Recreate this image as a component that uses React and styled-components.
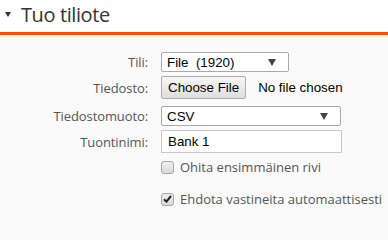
import React from "react";
import styled, { createGlobalStyle } from "styled-components";

const Global = createGlobalStyle`
  html, body { margin: 0; padding: 0; background: #fafafa; }
  body { width: 388px; height: 217px; overflow: hidden; font-family: "Open Sans", sans-serif; }
`;

const Header = styled.div`
  height: 32px;
  background: #fff;
  border-bottom: 3px solid #ff5000;
  display: flex;
  align-items: center;
  padding-left: 5px;
  box-sizing: content-box;
`;

const Caret = styled.svg`
  width: 6px;
  height: 5px;
  margin-right: 10px;
  margin-bottom: 3px;
`;

const Title = styled.h1`
  margin: 0 0 2px 0;
  font-family: "Open Sans", sans-serif;
  font-weight: 400;
  font-size: 20px;
  letter-spacing: -0.4px;
  color: #333;
  line-height: 1;
`;

const Form = styled.div`
  display: grid;
  grid-template-columns: 148px auto;
  column-gap: 13px;
  align-items: center;
  padding-top: 17px;
`;

const Label = styled.div`
  text-align: right;
  font-size: 13px;
  letter-spacing: -0.1px;
  color: #555;
  height: ${(p) => p.h}px;
  margin-bottom: ${(p) => p.mb}px;
  display: flex;
  align-items: center;
  justify-content: flex-end;
`;

const Cell = styled.div`
  height: ${(p) => p.h}px;
  margin-bottom: ${(p) => p.mb}px;
  display: flex;
  align-items: center;
`;

const SelectBox = styled.div`
  position: relative;
  width: ${(p) => p.w}px;
  height: 20px;
  box-sizing: border-box;
  border: 1px solid #a9a9a9;
  border-radius: 2px;
  background: #fff;
  font-family: "Liberation Sans", Arial, sans-serif;
  font-size: 13.33px;
  color: #000;
  display: flex;
  align-items: center;
  padding-left: 5px;
  white-space: pre;
`;

const Arrow = styled.svg`
  position: absolute;
  right: 12px;
  top: 6px;
  width: 8px;
  height: 7px;
`;

const FileButton = styled.div`
  height: 23px;
  box-sizing: border-box;
  border: 1px solid #adadad;
  border-radius: 2px;
  background: linear-gradient(#f6f6f6, #dedede);
  font-family: "Liberation Sans", Arial, sans-serif;
  font-size: 13.33px;
  color: #000;
  display: flex;
  align-items: center;
  padding: 0 6px;
`;

const FileText = styled.span`
  font-family: "Liberation Sans", Arial, sans-serif;
  font-size: 13.33px;
  color: #000;
  margin-left: 12px;
`;

const TextInput = styled.div`
  width: 181px;
  height: 23px;
  box-sizing: border-box;
  border: 1px solid #c8c8c8;
  background: #fff;
  font-family: "Liberation Sans", Arial, sans-serif;
  font-size: 13.33px;
  color: #000;
  display: flex;
  align-items: center;
  padding-left: 6px;
`;

const Check = styled.span`
  width: 13px;
  height: 13px;
  box-sizing: border-box;
  border: 1px solid #a6a6a6;
  border-radius: 3px;
  background: linear-gradient(#ededed, #dcdcdc);
  display: inline-flex;
  align-items: center;
  justify-content: center;
  margin-right: 6px;
`;

const CheckLabel = styled.span`
  font-size: 13px;
  color: #555;
`;

const Spacer = styled.div`
  height: ${(p) => p.h}px;
  margin-bottom: ${(p) => p.mb}px;
`;

const DownArrow = () => (
  <Arrow viewBox="0 0 8 7">
    <path d="M0 0 H8 L4 7 Z" fill="#444" />
  </Arrow>
);

export default function App() {
  return (
    <>
      <Global />
      <Header>
        <Caret viewBox="0 0 6 5">
          <path d="M0 0 H6 L3 5 Z" fill="#333" />
        </Caret>
        <Title>Tuo tiliote</Title>
      </Header>
      <Form>
        <Label h={20} mb={4}>Tili:</Label>
        <Cell h={20} mb={4}>
          <SelectBox w={128}>
            {"File  (1920)"}
            <DownArrow />
          </SelectBox>
        </Cell>

        <Label h={23} mb={7}>Tiedosto:</Label>
        <Cell h={23} mb={7}>
          <FileButton>Choose File</FileButton>
          <FileText>No file chosen</FileText>
        </Cell>

        <Label h={20} mb={4}>Tiedostomuoto:</Label>
        <Cell h={20} mb={4}>
          <SelectBox w={180}>
            CSV
            <DownArrow />
          </SelectBox>
        </Cell>

        <Label h={23} mb={7}>Tuontinimi:</Label>
        <Cell h={23} mb={7}>
          <TextInput>Bank 1</TextInput>
        </Cell>

        <Spacer h={14} mb={18} />
        <Cell h={14} mb={18}>
          <Check />
          <CheckLabel>Ohita ensimmäinen rivi</CheckLabel>
        </Cell>

        <Spacer h={14} mb={0} />
        <Cell h={14} mb={0}>
          <Check>
            <svg width="9" height="8" viewBox="0 0 9 8">
              <path d="M1 4.2 L3.4 6.6 L8 1" stroke="#222" strokeWidth="2" fill="none" />
            </svg>
          </Check>
          <CheckLabel>Ehdota vastineita automaattisesti</CheckLabel>
        </Cell>
      </Form>
    </>
  );
}
